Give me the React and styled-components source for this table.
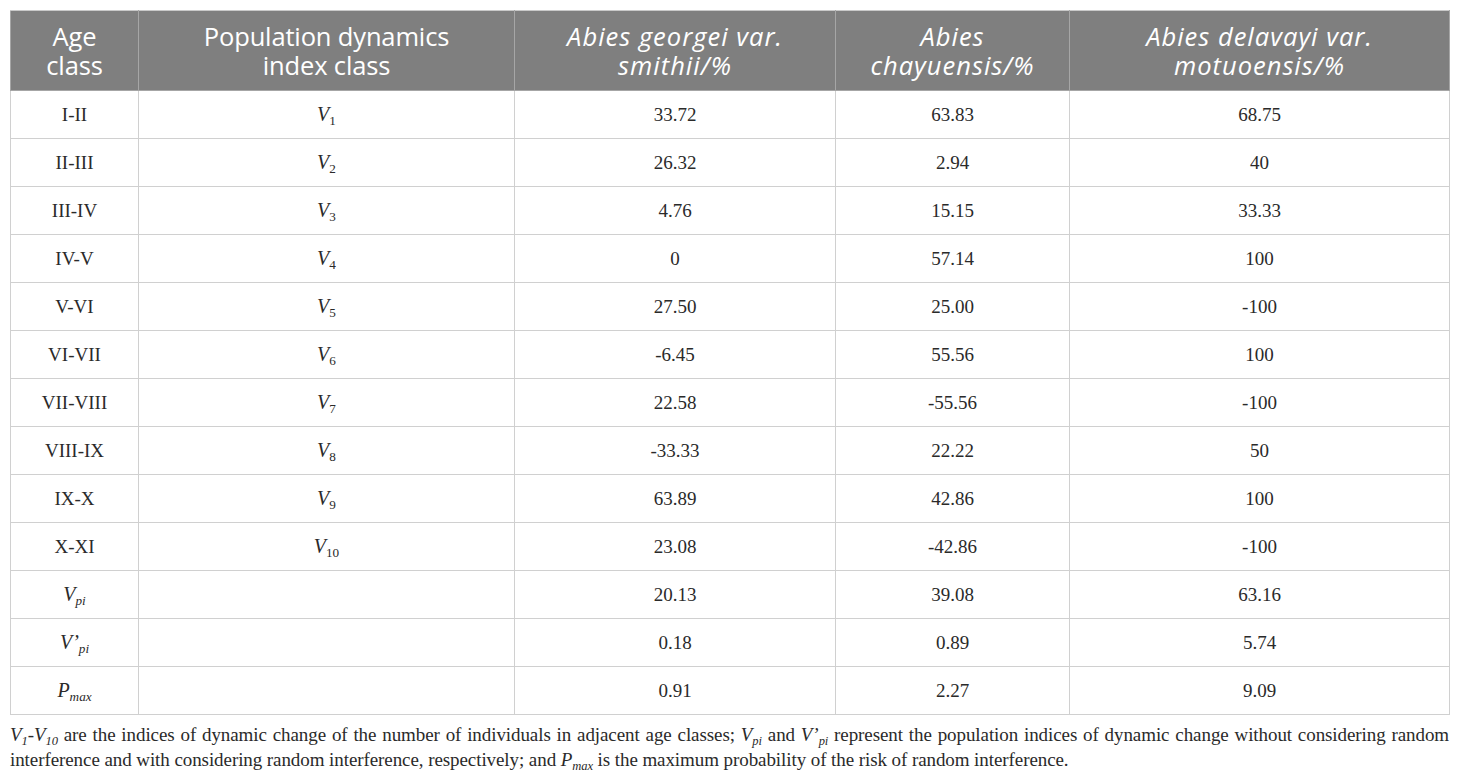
import React from "react";
import styled, { createGlobalStyle } from "styled-components";

const Global = createGlobalStyle`
  html, body { margin: 0; padding: 0; background: #ffffff; }
  body { font-family: "Liberation Serif", "Times New Roman", serif; }
`;

const Page = styled.div`
  padding: 10px 11px 0 10px;
  width: 1439px;
`;

const Table = styled.table`
  width: 1439px;
  border-collapse: collapse;
  table-layout: fixed;
  border: 1px solid #c9c9c9;
`;

const HeadCell = styled.th`
  background: #7f7f7f;
  color: #ffffff;
  font-family: "Open Sans", "Noto Sans", sans-serif;
  font-weight: 400;
  font-size: 25.5px;
  line-height: 29px;
  font-style: ${(p) => (p.$italic ? "italic" : "normal")};
  letter-spacing: ${(p) => (p.$italic ? "1px" : "-0.15px")};
  text-align: center;
  vertical-align: middle;
  height: 79px;
  padding: 0 4px;
  border: 1px solid #a6a6a6;
  border-top-color: #c9c9c9;
`;

const Row = styled.tr`
  height: 48px;
`;

const Cell = styled.td`
  font-family: "Liberation Serif", "Times New Roman", serif;
  font-size: 19px;
  color: #2a2a2a;
  text-align: center;
  vertical-align: middle;
  padding: 0 8px;
  border: 1px solid #d0d0d0;
`;

const Var = styled.span`
  font-style: italic;
  font-size: 20px;
`;

const Sub = styled.sub`
  font-size: 0.66em;
  font-style: ${(p) => (p.$italic ? "italic" : "normal")};
  vertical-align: -0.3em;
  line-height: 0;
`;

const Note = styled.p`
  margin: 7px 0 0 0;
  font-family: "Liberation Serif", "Times New Roman", serif;
  font-size: 19px;
  line-height: 25px;
  color: #2a2a2a;
  text-align: justify;
  letter-spacing: -0.08px;
`;

const NoteVar = styled.span`
  font-style: italic;
`;

const rows = [
  ["I-II", "1", "33.72", "63.83", "68.75"],
  ["II-III", "2", "26.32", "2.94", "40"],
  ["III-IV", "3", "4.76", "15.15", "33.33"],
  ["IV-V", "4", "0", "57.14", "100"],
  ["V-VI", "5", "27.50", "25.00", "-100"],
  ["VI-VII", "6", "-6.45", "55.56", "100"],
  ["VII-VIII", "7", "22.58", "-55.56", "-100"],
  ["VIII-IX", "8", "-33.33", "22.22", "50"],
  ["IX-X", "9", "63.89", "42.86", "100"],
  ["X-XI", "10", "23.08", "-42.86", "-100"],
];

const summary = [
  [
    <Var key="v">
      V<Sub $italic>pi</Sub>
    </Var>,
    "20.13",
    "39.08",
    "63.16",
  ],
  [
    <Var key="v">
      V’<Sub $italic>pi</Sub>
    </Var>,
    "0.18",
    "0.89",
    "5.74",
  ],
  [
    <Var key="v">
      P<Sub $italic>max</Sub>
    </Var>,
    "0.91",
    "2.27",
    "9.09",
  ],
];

export default function App() {
  return (
    <Page>
      <Global />
      <Table>
        <colgroup>
          <col style={{ width: 128 }} />
          <col style={{ width: 376 }} />
          <col style={{ width: 321 }} />
          <col style={{ width: 234 }} />
          <col style={{ width: 380 }} />
        </colgroup>
        <thead>
          <tr>
            <HeadCell>
              Age
              <br />
              class
            </HeadCell>
            <HeadCell>
              Population dynamics
              <br />
              index class
            </HeadCell>
            <HeadCell $italic>
              Abies georgei var.
              <br />
              smithii/%
            </HeadCell>
            <HeadCell $italic>
              Abies
              <br />
              chayuensis/%
            </HeadCell>
            <HeadCell $italic>
              Abies delavayi var.
              <br />
              motuoensis/%
            </HeadCell>
          </tr>
        </thead>
        <tbody>
          {rows.map((r) => (
            <Row key={r[0]}>
              <Cell>{r[0]}</Cell>
              <Cell>
                <Var>
                  V<Sub>{r[1]}</Sub>
                </Var>
              </Cell>
              <Cell>{r[2]}</Cell>
              <Cell>{r[3]}</Cell>
              <Cell>{r[4]}</Cell>
            </Row>
          ))}
          {summary.map((r, i) => (
            <Row key={i}>
              <Cell>{r[0]}</Cell>
              <Cell />
              <Cell>{r[1]}</Cell>
              <Cell>{r[2]}</Cell>
              <Cell>{r[3]}</Cell>
            </Row>
          ))}
        </tbody>
      </Table>
      <Note>
        <NoteVar>
          V<Sub $italic>1</Sub>-V<Sub $italic>10</Sub>
        </NoteVar>{" "}
        are the indices of dynamic change of the number of individuals in adjacent age classes;{" "}
        <NoteVar>
          V<Sub $italic>pi</Sub>
        </NoteVar>{" "}
        and{" "}
        <NoteVar>
          V’<Sub $italic>pi</Sub>
        </NoteVar>{" "}
        represent the population indices of dynamic change without considering random interference and
        with considering random interference, respectively; and{" "}
        <NoteVar>
          P<Sub $italic>max</Sub>
        </NoteVar>{" "}
        is the maximum probability of the risk of random interference.
      </Note>
    </Page>
  );
}
